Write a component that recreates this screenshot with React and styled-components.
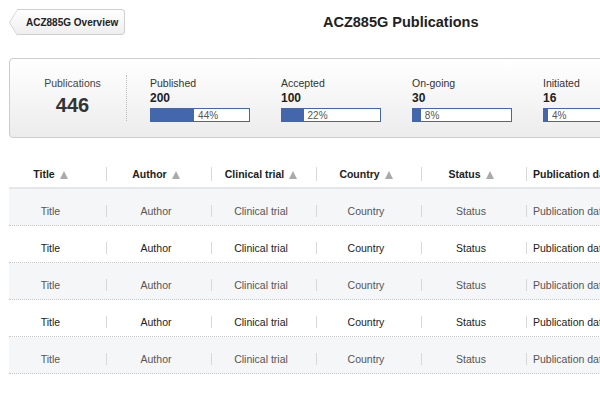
import React from "react";
import styled, { createGlobalStyle } from "styled-components";

const GlobalStyle = createGlobalStyle`
  html, body {
    margin: 0;
    padding: 0;
    background: #ffffff;
    font-family: "Liberation Sans", Arial, sans-serif;
    color: #333;
    overflow: hidden;
  }
`;

const stats = [
  { label: "Published", value: 200, pct: 44 },
  { label: "Accepted", value: 100, pct: 22 },
  { label: "On-going", value: 30, pct: 8 },
  { label: "Initiated", value: 16, pct: 4 },
];

const columns = [
  "Title",
  "Author",
  "Clinical trial",
  "Country",
  "Status",
  "Publication date",
];

const rows = [0, 1, 2, 3, 4];

const Page = styled.div`
  width: 600px;
  height: 400px;
  padding: 9px 0 0 9px;
  box-sizing: border-box;
  overflow: hidden;
`;

const Header = styled.header`
  display: grid;
  grid-template-columns: 150px 1fr;
  align-items: center;
  height: 26px;
`;

const BackButton = styled.button`
  position: relative;
  height: 26px;
  width: 108px;
  margin-left: 8px;
  padding: 0 0 0 9px;
  border: 1px solid #cfcfcf;
  border-left: none;
  border-radius: 0 4px 4px 0;
  background: linear-gradient(#ffffff, #eeeeee);
  font-family: inherit;
  font-size: 10px;
  font-weight: bold;
  color: #222;
  text-align: left;
  white-space: nowrap;
  &::before {
    content: "";
    position: absolute;
    left: -9px;
    top: 3px;
    width: 17.7px;
    height: 17.7px;
    transform: scaleX(0.62) rotate(45deg);
    border-left: 1px solid #cfcfcf;
    border-bottom: 1px solid #cfcfcf;
    background: linear-gradient(135deg, #ffffff, #eeeeee);
    z-index: 0;
  }
  span {
    position: relative;
    z-index: 1;
  }
`;

const Title = styled.h1`
  margin: 0;
  padding-left: 164px;
  font-size: 14.5px;
  font-weight: bold;
  color: #222;
  white-space: nowrap;
`;

const StatsPanel = styled.section`
  margin-top: 23px;
  width: 620px;
  height: 80px;
  box-sizing: border-box;
  border: 1px solid #cccccc;
  border-radius: 4px;
  background: linear-gradient(#ffffff, #ececec);
  display: flex;
  align-items: flex-start;
`;

const Total = styled.div`
  flex-shrink: 0;
  width: 117px;
  height: 46px;
  margin-top: 16px;
  border-right: 1px dotted #bbbbbb;
  display: flex;
  flex-direction: column;
  align-items: center;
  padding-left: 9px;
  box-sizing: border-box;
`;

const TotalLabel = styled.div`
  font-size: 10.5px;
  color: #444;
  margin-top: 2px;
`;

const TotalValue = styled.div`
  font-size: 20px;
  font-weight: bold;
  color: #333;
  margin-top: 5px;
`;

const StatGroup = styled.div`
  flex-shrink: 0;
  display: flex;
  margin-left: 23px;
  margin-top: 18px;
`;

const Stat = styled.div`
  flex-shrink: 0;
  width: 131px;
  display: flex;
  flex-direction: column;
`;

const StatLabel = styled.div`
  font-size: 10.5px;
  color: #333;
`;

const StatValue = styled.div`
  font-size: 12px;
  font-weight: bold;
  color: #222;
  margin-top: 2px;
`;

const Bar = styled.div`
  width: 100px;
  height: 14px;
  margin-top: 3px;
  box-sizing: border-box;
  border: 1px solid #4466aa;
  background: #fff;
  display: flex;
  align-items: center;
`;

const BarFill = styled.div`
  height: 100%;
  background: #4466aa;
  flex-shrink: 0;
`;

const BarText = styled.span`
  font-size: 10px;
  color: #555;
  padding-left: 4px;
`;

const Table = styled.div`
  margin-top: 22px;
  width: 640px;
`;

const Row = styled.div`
  display: grid;
  grid-template-columns: 97px repeat(5, 105px);
  align-items: center;
  box-sizing: border-box;
  height: ${(p) => (p.$head ? "29px" : "37px")};
  padding-top: ${(p) => (p.$head ? "0" : "7px")};
  background: ${(p) => (p.$shade ? "#f5f6f8" : "#ffffff")};
  border-bottom: ${(p) => (p.$head ? "2px solid #e4e6ea" : "1px dotted #c8c8c8")};
`;

const Cell = styled.div`
  position: relative;
  text-align: center;
  padding-right: ${(p) => (p.$first ? "14px" : "5px")};
  font-size: 10.5px;
  font-weight: ${(p) => (p.$head ? "bold" : "normal")};
  color: ${(p) => (p.$head ? "#222" : p.$dim ? "#555" : "#222")};
  white-space: nowrap;
  &::before {
    content: "";
    display: ${(p) => (p.$first ? "none" : "block")};
    position: absolute;
    left: 0;
    top: 50%;
    height: ${(p) => (p.$head ? "14px" : "12px")};
    margin-top: ${(p) => (p.$head ? "-7px" : "-6px")};
    border-left: 1px solid #d8d8d8;
  }
`;

const LastCell = styled(Cell)`
  text-align: left;
  padding-left: 7px;
`;

const Arrow = styled.span`
  display: inline-block;
  width: 0;
  height: 0;
  margin-left: 5px;
  border-left: 4px solid transparent;
  border-right: 4px solid transparent;
  border-bottom: 8px solid #aaaaaa;
  vertical-align: -1px;
`;

export default function App() {
  return (
    <>
      <GlobalStyle />
      <Page>
        <Header>
          <BackButton>
            <span>ACZ885G Overview</span>
          </BackButton>
          <Title>ACZ885G Publications</Title>
        </Header>

        <StatsPanel>
          <Total>
            <TotalLabel>Publications</TotalLabel>
            <TotalValue>446</TotalValue>
          </Total>
          <StatGroup>
            {stats.map((s) => (
              <Stat key={s.label}>
                <StatLabel>{s.label}</StatLabel>
                <StatValue>{s.value}</StatValue>
                <Bar>
                  <BarFill style={{ width: `${s.pct}%` }} />
                  <BarText>{s.pct}%</BarText>
                </Bar>
              </Stat>
            ))}
          </StatGroup>
        </StatsPanel>

        <Table>
          <Row $head>
            {columns.map((c, i) =>
              i === columns.length - 1 ? (
                <LastCell key={c} $head>
                  {c}
                </LastCell>
              ) : (
                <Cell key={c} $head $first={i === 0}>
                  {c}
                  <Arrow />
                </Cell>
              )
            )}
          </Row>
          {rows.map((r) => (
            <Row key={r} $shade={r % 2 === 0}>
              {columns.map((c, i) =>
                i === columns.length - 1 ? (
                  <LastCell key={c} $dim={r % 2 === 0}>
                    {c}
                  </LastCell>
                ) : (
                  <Cell key={c} $first={i === 0} $dim={r % 2 === 0}>
                    {c}
                  </Cell>
                )
              )}
            </Row>
          ))}
        </Table>
      </Page>
    </>
  );
}
